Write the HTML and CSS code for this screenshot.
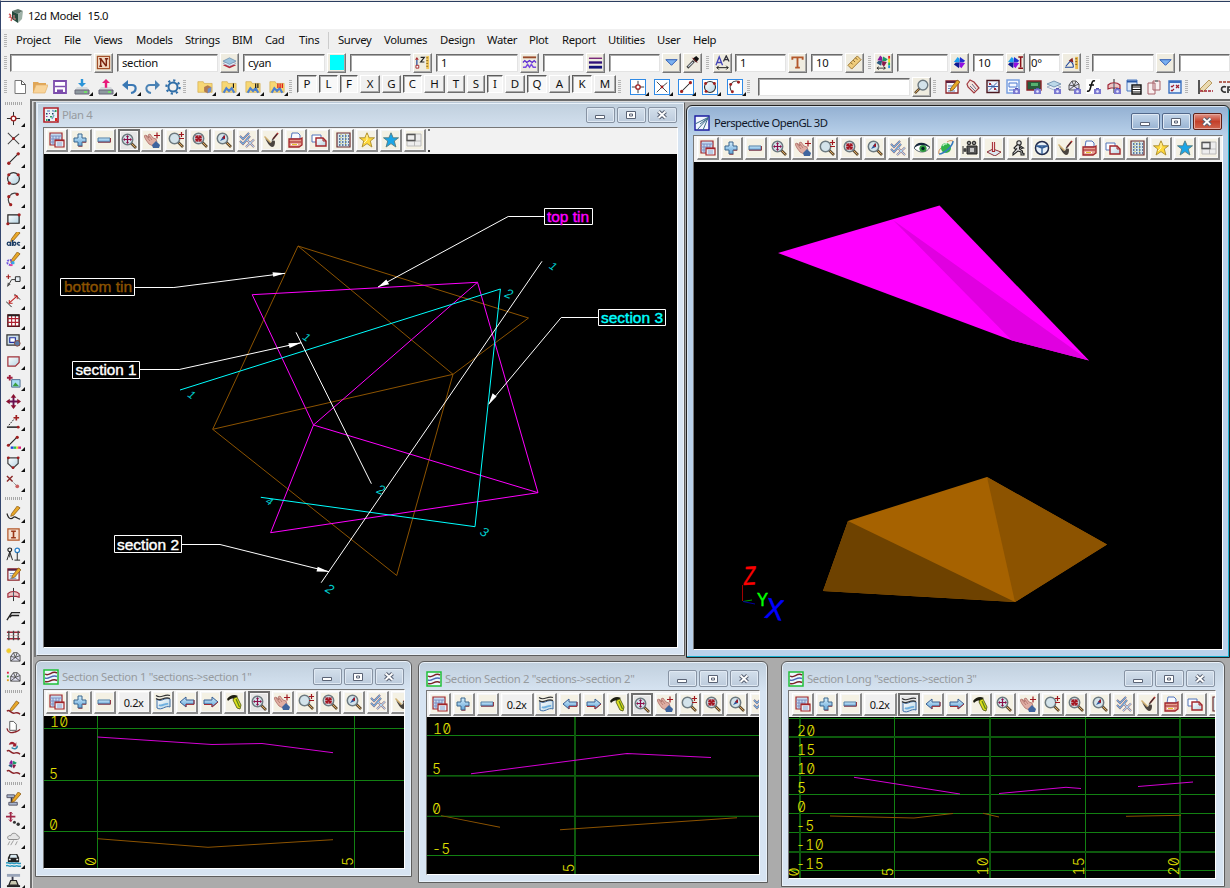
FILE: index.html
```html
<!DOCTYPE html>
<html lang="en">
<head>
<meta charset="utf-8">
<title>12d Model 15.0</title>
<link rel="stylesheet" href="styles.css">
</head>
<body>
<svg class="defs" width="0" height="0">
<defs>
<linearGradient id="blu" x2="0" y2="1"><stop offset="0" stop-color="#d5effc"/><stop offset="1" stop-color="#5fa3d8"/></linearGradient>
<linearGradient id="pal" x2="1" y2="1"><stop offset="0" stop-color="#fff"/><stop offset="1" stop-color="#b5d3e2"/></linearGradient>
</defs>
<symbol id="lens" viewBox="0 0 16 16"><path d="M10 10l5 5" stroke="#5d4a33" stroke-width="2.6"/><path d="M11 11l3.500 3.500" stroke="#e0a95b" stroke-width="1"/><circle cx="6.500" cy="6.500" r="5.200" fill="#d3e3ea" stroke="#6d7a80" stroke-width="1.500"/></symbol>
<symbol id="menu" viewBox="0 0 16 16"><path d="M1 1h12v12H1z" fill="#c3dcf0" stroke="#a3262b" stroke-width="1.200"/><path d="M1 4h12M4 4v9M7 4v4M10 4v4M1 7h9M1 10h4" stroke="#7e8fc4"/><path d="M6 8h9v7H6z" fill="#e6eef8" stroke="#a3262b" stroke-width="1.200"/><path d="M6 8.500h9" stroke="#a3262b" stroke-width="1.400"/><path d="M8 11h5M8 13h5" stroke="#8aa6d0"/></symbol>
<symbol id="plus" viewBox="0 0 16 16"><path d="M6 2h4v4h4v4h-4v4H6v-4H2V6h4z" fill="url(#blu)" stroke="#3b668e"/><path d="M6.500 14.300h4M10.300 10.300h4" stroke="#8f4a55"/></symbol>
<symbol id="minus" viewBox="0 0 16 16"><path d="M2 6h12v4H2z" fill="url(#blu)" stroke="#4f7fa8"/><path d="M2 10.200h12.500V6" fill="none" stroke="#8f3a48"/></symbol>
<symbol id="fit" viewBox="0 0 16 16"><use href="#lens"/><path d="M6.500 3v7M3 6.500h7" stroke="#8b0f4a" stroke-width="1.200"/><path d="M5 4l1.500-2L8 4M5 9l1.500 2L8 9M4 5L2 6.500 4 8M9 5l2 1.500L9 8" fill="#8b0f4a"/></symbol>
<symbol id="pan" viewBox="0 0 16 16"><path d="M0 4l2-1 3 3-1-3 2-1 3 4 3 1 1 3-4 4-4-2-3-4z" fill="#dfaea3" stroke="#a8645e" stroke-width=".7"/><path d="M2 4l4 5M5 4l3 4" stroke="#a86a62" stroke-width=".7"/><path d="M8 13l4-4 4 4-1 3H9z" fill="#3f659e"/><path d="M13 .5v6M10 3.500h6" stroke="#a01820" stroke-width="1.200"/></symbol>
<symbol id="zpm" viewBox="0 0 16 16"><use href="#lens"/><path d="M13.500 0v5M11 2.500h5M11 6.500h5" stroke="#a01820" stroke-width="1.200"/></symbol>
<symbol id="zin" viewBox="0 0 16 16"><use href="#lens"/><path d="M3.500 3.500l6 6M9.500 3.500l-6 6" stroke="#a31420" stroke-width="1.400"/><path d="M3.200 5.700h2.500V3.200M7.300 3.200v2.500h2.500M3.200 7.300h2.500v2.500M7.300 9.800V7.300h2.500" fill="none" stroke="#a31420" stroke-width="1.200"/></symbol>
<symbol id="zprev" viewBox="0 0 16 16"><use href="#lens"/><path d="M4 9l4-6 1 4z" fill="#2a5aa0"/><path d="M6 6l3-3v4z" fill="#a31420"/></symbol>
<symbol id="checks" viewBox="0 0 16 16"><g fill="none"><path d="M1 4l3 3 6-6M1 9l3 3 7-8M8 8l7 7M15 7.500L7 15" stroke="#96505e" stroke-width="2"/><path d="M1 4l3 3 6-6M1 9l3 3 7-8" stroke="#6fb0e0" stroke-width="1.300"/><path d="M8 8l7 7M15 7.500L7 15" stroke="#aed8f2" stroke-width="1.100"/></g></symbol>
<symbol id="brush" viewBox="0 0 16 16"><path d="M15 1l-5 6" stroke="#b03030" stroke-width="1.800"/><path d="M14 2L9 8.500" stroke="#333" stroke-width="1.200"/><path d="M2 6l6 5c1-3 4-3 4-1 0 3-1 5-3 5C6 14 4 10 2 6z" fill="#4a443e"/><path d="M1.500 4.500l6 6" stroke="#d0b070" stroke-width="1.500"/></symbol>
<symbol id="print" viewBox="0 0 16 16"><path d="M5 1h6l2 2v4H4z" fill="#f6f9ff" stroke="#5274bb"/><path d="M2 7h11l2-1v7l-3 2H2z" fill="#e6a091" stroke="#a3262b" stroke-width="1.300"/><path d="M2 10h12" stroke="#a3262b"/><path d="M4 12.500h7" stroke="#fff" stroke-width="1.500"/><path d="M5 12.500h5" stroke="#e3c52a" stroke-width="1"/></symbol>
<symbol id="copy" viewBox="0 0 16 16"><path d="M1 3h9v7H1z" fill="#fff" stroke="#5274bb"/><path d="M5 6h7l3 3v5H5z" fill="url(#pal)" stroke="#a3262b" stroke-width="1.400"/><path d="M12 6v3h3" fill="none" stroke="#a3262b"/></symbol>
<symbol id="grid" viewBox="0 0 16 16"><path d="M2 1h13v14H2z" fill="#d6e8ee" stroke="#6b2a2e" stroke-width="1.200"/><path d="M4 4h10M4 7h10M4 10h10M4 13h10" stroke="#3c5a86" stroke-width="1.400" stroke-dasharray="1.500 1.500"/><path d="M6 2v12M10.500 2v12" stroke="#c8b84a" stroke-width="1" stroke-dasharray="1 2"/></symbol>
<symbol id="star" viewBox="0 0 16 16"><path d="M8 .8l2.200 5H15.500L11.300 9l1.600 6L8 11.600 3.100 15l1.600-6L.5 5.800h5.300z" fill="#ffd93b" stroke="#a98a2c" stroke-width=".9"/><path d="M8 3v5l-3 3" stroke="#fff6c0" fill="none"/></symbol>
<symbol id="starb" viewBox="0 0 16 16"><path d="M8 .8l2.200 5H15.500L11.300 9l1.600 6L8 11.600 3.100 15l1.600-6L.5 5.800h5.300z" fill="#1ba6e8" stroke="#557c80" stroke-width=".9"/></symbol>
<symbol id="layout" viewBox="0 0 16 16"><path d="M1 2h14v12H1zM8.500 2v12M1 9h14" fill="#ededed" stroke="#bbb"/><path d="M1 2.500h8v6H1z" fill="#eee" stroke="#555" stroke-width="1.300"/></symbol>
<symbol id="eye" viewBox="0 0 16 16"><path d="M0 8c3-5 10-6 16-1-3 6-11 7-16 1z" fill="#fff" stroke="#234" stroke-width=".7"/><circle cx="9" cy="8.500" r="3.600" fill="#2f9a3d"/><circle cx="9" cy="8.500" r="1.700" fill="#022"/><path d="M0 8c2-7 12-7 16 0-5-4-11-4-16 0z" fill="#15273a"/></symbol>
<symbol id="planet" viewBox="0 0 16 16"><circle cx="8" cy="8" r="5" fill="#32b24a"/><path d="M5 6a3 3 0 014-2" stroke="#baf0c0" stroke-width="1.500" fill="none"/><path d="M1 14C6 14 15 6 15 1" stroke="#357ac0" stroke-width="1.600" fill="none"/><path d="M1 14c-1-3 1-5 2-6M15 1c-3-1-4 0-6 1" stroke="#c5783b" stroke-width=".8" fill="none"/></symbol>
<symbol id="camera" viewBox="0 0 16 16"><path d="M5 6h10v8H5z" fill="#555" stroke="#222"/><path d="M1 6v8M1 10h4M2 8l2 4M4 8l-2 4" stroke="#333"/><circle cx="7" cy="3" r="1.800" fill="#888" stroke="#222"/><circle cx="12" cy="3" r="1.800" fill="#888" stroke="#222"/><path d="M8 8h4v4H8z" fill="#c5c5c5"/></symbol>
<symbol id="joy" viewBox="0 0 16 16"><path d="M1 12l6-3 8 3-6 4z" fill="#dce8f0" stroke="#8b3038"/><path d="M7.500 12V2" stroke="#a3262b" stroke-width="3.200"/><path d="M7.500 11V2" stroke="#f4d9d9" stroke-width="1.200"/></symbol>
<symbol id="walk" viewBox="0 0 16 16"><g fill="#ddd" stroke="#222" stroke-width="1.100"><circle cx="9" cy="3" r="2.200"/><path d="M7 5L4 8l1.500 1.500L7 8.500 3 13v2l5-4 3 1v3h3v-1.500l-1.500-.5V11L9.500 9V7l2 1.500 2-.5L9 5z"/></g></symbol>
<symbol id="wheel" viewBox="0 0 16 16"><circle cx="8" cy="8" r="6.500" fill="#e8f1f8" stroke="#222b4a" stroke-width="1.500"/><path d="M2 6h12M8 7v7M8 8L3 6M8 8l5-2" stroke="#335e96" stroke-width="1.400"/></symbol>
<symbol id="sec" viewBox="0 0 16 16"><path d="M2 5c4 4 7-2 13 0v8c-5-2-8 4-13 1z" fill="url(#pal)" stroke="#3e6ea8"/><path d="M1 1.500c5 4 8-2 14 0M1 4.500c5 4 8-3 14 0" fill="none" stroke="#333" stroke-width="1.100"/><path d="M4 11c3 2 6-2 9-1" stroke="#6fb0e0" fill="none" stroke-width="2"/></symbol>
<symbol id="left" viewBox="0 0 16 16"><path d="M1 8l6-5v3h8v4H7v3z" fill="url(#blu)" stroke="#365e94"/><path d="M7 13v-2.600h8V6" fill="none" stroke="#a0303a"/></symbol>
<symbol id="right" viewBox="0 0 16 16"><path d="M15 8L9 3v3H1v4h8v3z" fill="url(#blu)" stroke="#365e94"/><path d="M1 10.500h8V13l6-5" fill="none" stroke="#a0303a"/></symbol>
<symbol id="torch" viewBox="0 0 16 16"><path d="M0 5c3-4 7-5 11-3l-4 3C5 4 3 5 1 7z" fill="#1c1c10"/><path d="M7 4l3-1 4 8-1 4-3-1-4-8z" fill="#dfe01e" stroke="#44500a" stroke-width=".8"/><path d="M9 5l3.500 8" stroke="#5c8416" stroke-width="1.200"/></symbol>
<!-- window captions -->
<symbol id="w-plan" viewBox="0 0 16 16"><path d="M1 1h14v14H1z" fill="#eaf3f4" stroke="#b2222a" stroke-width="1.600"/><path d="M4 4h3M9 3.500l3 1M11 8l-2 4" stroke="#7fa0c8" stroke-width="1.500"/><path d="M3 6h1.500v1.500H3zM9 6h1.500v1.500H9zM5 12h2v2H5z" fill="#16406a"/><path d="M3 12h1.500v2H3zM12 3h1.500v2H12zM7 9h2v1.500H7z" fill="#2ca05a"/><path d="M3 9h1.500v1H3zM6 6h1v1H6z" fill="#8a30a0"/><path d="M12 11h2v3h-2z" fill="#e02020"/></symbol>
<symbol id="w-persp" viewBox="0 0 16 16"><path d="M1 1h14v14H1z" fill="#f2f6ff" stroke="#1b1ba0" stroke-width="1.400"/><path d="M1 9L15 2 3 15M14 3L9 15M14 3L6 9" fill="none" stroke="#3a6a86"/></symbol>
<symbol id="w-sec" viewBox="0 0 16 16"><path d="M1 1h14v14H1z" fill="#eef8ff" stroke="#20c038" stroke-width="1.500"/><path d="M2 5c4 3 7-4 12-1M2 12.500c4 2 7-4 12-1" fill="none" stroke="#7a2226" stroke-width="1.500"/><path d="M2 9c4 2 7-4 12-1.500" fill="none" stroke="#4a68b4" stroke-width="1.400"/></symbol>
<symbol id="logo" viewBox="0 0 16 16"><path d="M4 3l6-2 5 2-5 3z" fill="#60776c"/><path d="M4 3l6 3v9l-6-4z" fill="#274b3e"/><path d="M10 6l5-3-1 8-4 4z" fill="#9db0a6"/><path d="M1 6c2 1 2 2 1 3 2 0 2 2 1 4" stroke="#d25a5a" fill="none" stroke-width="1.500"/><path d="M6 7v4h2" stroke="#d88" fill="none"/></symbol>
<!-- field buttons -->
<symbol id="b-n" viewBox="0 0 16 16"><path d="M1.500 1.500h13v13h-13z" fill="#f0d6c0" stroke="#a4512a" stroke-width="1.300"/><path d="M5 12V4M3.500 4H6M5 4l6 8M11 12V4M9.500 4H13M3.500 12h3" stroke="#7c2410" stroke-width="1.500"/></symbol>
<symbol id="layers" viewBox="0 0 16 16"><path d="M1 11l7-3 7 3-7 3z" fill="#b52a3a"/><path d="M1 9l7-3 7 3-7 3z" fill="#e8eef6" stroke="#8899b8" stroke-width=".6"/><path d="M1 6.500L8 3l7 3.500L8 10z" fill="#9cc3dd" stroke="#54789c" stroke-width=".6"/></symbol>
<symbol id="zrule" viewBox="0 0 16 16"><path d="M2 11V5" stroke="#22489a" stroke-width="1.300"/><path d="M0 5l2-3 2 3z" fill="#a3262b"/><path d="M1 11h3v3H1z" fill="#fff" stroke="#a3262b"/><path d="M6 2.500h4L6 7.500h4" stroke="#222" fill="none" stroke-width="1.200"/><path d="M12 1h3v14h-3z" fill="#f0c65a"/><path d="M12 3h2M12 6h2M12 9h2M12 12h2" stroke="#8a6518"/></symbol>
<symbol id="wave" viewBox="0 0 16 16"><path d="M1 2.500h14" stroke="#9a4b2a" stroke-width="2"/><path d="M1 8l2-2 2 2 3-2 3 2 2-2 2 2" fill="none" stroke="#5a2ad0" stroke-width="1.400"/><path d="M1 13h3l2-3 2 3 2-3 2 3h3" fill="none" stroke="#7a4ae0" stroke-width="1.600"/></symbol>
<symbol id="bars" viewBox="0 0 16 16"><path d="M1 3.500h14" stroke="#7a2a7a" stroke-width="1.500"/><path d="M1 8h14" stroke="#30107a" stroke-width="2.500"/><path d="M1 13h14" stroke="#12127a" stroke-width="3"/></symbol>
<symbol id="drop" viewBox="0 0 16 16"><path d="M2 5h12l-6 6z" fill="#7ab0f0" stroke="#2855b0"/></symbol>
<symbol id="dropper" viewBox="0 0 16 16"><path d="M2.500 13.500l7-7" stroke="#444" stroke-width="3"/><path d="M3.500 12.500l5-5" stroke="#d9e4ec" stroke-width="1.200"/><path d="M8 4l4 4 3-4-3-3z" fill="#111"/><path d="M8 3l5 5" stroke="#8b2020"/></symbol>
<symbol id="aa" viewBox="0 0 16 16"><path d="M1 11L4.500 2 8 11M2.500 8h4" fill="none" stroke="#4444b8" stroke-width="1.400"/><path d="M9 7l3-6 3 6M10 5h4" fill="none" stroke="#30303a" stroke-width="1.400"/><path d="M2 13.500h12M4 11.500l-2 2 2 2M12 11.500l2 2-2 2" fill="none" stroke="#111"/></symbol>
<symbol id="tee" viewBox="0 0 16 16"><path d="M2.500 5V2.500h11V5M8 2.500v11M5.500 13.500h5" fill="none" stroke="#b4582a" stroke-width="2"/></symbol>
<symbol id="rule" viewBox="0 0 16 16"><path d="M1 11L11 1l4 4L5 15z" fill="#f0cd7c" stroke="#9b7430"/><path d="M4 8l2 2M6.500 5.500l2 2M9 3l2 2" stroke="#7a5a20"/></symbol>
<symbol id="pin" viewBox="0 0 16 16"><path d="M8 8L3 7 6 2l2 2z" fill="#8a1a9a"/><path d="M8 8l1-5 5 3-2 2z" fill="#1a9a6a"/><path d="M8 8l5 1-3 5-2-2z" fill="#8a1a4a"/><path d="M8 8l-1 5-5-3 2-2z" fill="#2a5a80"/></symbol>
<symbol id="pinc" viewBox="0 0 16 16"><use href="#pin" x="-1.500" y="-1.500"/><path d="M1 14h9M3 12.500L1 14l2 1.500M8 12.500l2 1.500-2 1.500" fill="none" stroke="#222" stroke-width=".9"/><path d="M14 1v3" stroke="#e02020" stroke-width="2"/><path d="M14 4v4" stroke="#e8e020" stroke-width="2"/><path d="M14 8v3" stroke="#20c040" stroke-width="2"/><path d="M14 11v3" stroke="#2090e0" stroke-width="2"/></symbol>
<symbol id="pinb" viewBox="0 0 16 16"><path d="M8 8L2 7.500 6 2l2 2z" fill="#1aa0f0"/><path d="M8 8l.5-6L14 6l-2 2z" fill="#2030d0"/><path d="M8 8l6 .5L10 14l-2-2z" fill="#9010e0"/><path d="M8 8l-.5 6L2 10l2-2z" fill="#111a90"/></symbol>
<symbol id="pinh" viewBox="0 0 16 16"><use href="#pinb" x="-2"/><path d="M11 2h5M13.500 3v10M11 14h5" stroke="#8a1018" stroke-width="1.600"/></symbol>
<symbol id="angle" viewBox="0 0 16 16"><path d="M1 13h9M2 12l6-7M7 7c2 1 3 3 3 6" fill="none" stroke="#22489a" stroke-width="1.200"/><path d="M5 6l4-3 1 5z" fill="#8a2020"/><path d="M12 2h3v13h-3z" fill="#e8b848"/><path d="M12 4h2M12 7h2M12 10h2" stroke="#7a5a20"/></symbol>
<!-- standard toolbar -->
<symbol id="new" viewBox="0 0 16 16"><path d="M3 1.500h6.500l4 4v9H3z" fill="#fff" stroke="#777"/><path d="M9.500 1.500v4h4" fill="none" stroke="#555"/></symbol>
<symbol id="open" viewBox="0 0 16 16"><path d="M1 14V3h5l1 1h7v3" fill="#e0a656"/><path d="M1 14L4 6h12l-3 8z" fill="#f8d49a" stroke="#e3b06a" stroke-width=".7"/></symbol>
<symbol id="save" viewBox="0 0 16 16"><path d="M2 2h12v12H2z" fill="#fff" stroke="#7c4dac" stroke-width="1.800"/><path d="M3 7.500h10" stroke="#7c4dac" stroke-width="1.500"/><path d="M5 10.500h6V14H5z" fill="#7c4dac"/></symbol>
<symbol id="disk" viewBox="0 0 16 16"><path d="M1 11l2-3h10l2 3z" fill="#d5dadd"/><path d="M1 11h14v4H1z" fill="#8d999f" stroke="#667"/><path d="M10 13h3" stroke="#6bf05a" stroke-width="1.600"/></symbol>
<symbol id="imp" viewBox="0 0 16 16"><use href="#disk"/><path d="M6.500 0h3v5H13l-5 5-5-5h3.500z" fill="#2a94d8" transform="translate(1.600 0) scale(.8)"/></symbol>
<symbol id="exp" viewBox="0 0 16 16"><use href="#disk"/><path d="M6.500 11h3V5H13L8 0 3 5h3.500z" fill="#e8187a" transform="translate(1.600 0) scale(.8)"/></symbol>
<symbol id="undo" viewBox="0 0 16 16"><path d="M3 6h7c5 0 5 7-1 8" fill="none" stroke="#3a78b4" stroke-width="2.200"/><path d="M0 6l6-5v10z" fill="#3a78b4"/></symbol>
<symbol id="redo" viewBox="0 0 16 16"><path d="M13 6H6c-5 0-5 7 1 8" fill="none" stroke="#4a82b4" stroke-width="2"/><path d="M16 6l-5-5v10z" fill="#4a82b4"/></symbol>
<symbol id="gear" viewBox="0 0 16 16"><circle cx="8" cy="8" r="4.500" fill="none" stroke="#2f6ea8" stroke-width="2"/><circle cx="8" cy="8" r="6.600" fill="none" stroke="#2f6ea8" stroke-width="2.200" stroke-dasharray="2.200 2.980"/></symbol>
<symbol id="fold" viewBox="0 0 18 16"><path d="M1 14V2h6l1 2h9v10z" fill="#f7d774" stroke="#cfa743" stroke-width=".7"/></symbol>
<symbol id="f0" viewBox="0 0 18 16"><use href="#fold"/><path d="M8 8l4-2 4 2v5l-4 2-4-2z" fill="#b07a50"/><path d="M12 10l4-2v5l-4 2z" fill="#6a8fd0"/></symbol>
<symbol id="fg" viewBox="0 0 18 16"><use href="#fold"/><path d="M3 14.500l3-5 3 3 3-3 3 5" fill="none" stroke="#4c80d0" stroke-width="2.400"/></symbol>
<symbol id="f1" viewBox="0 0 18 16"><use href="#fg"/><path d="M14 4v5" stroke="#111" stroke-width="1.300"/></symbol>
<symbol id="f2" viewBox="0 0 18 16"><use href="#fg"/><path d="M12 4v5M14.500 4v5" stroke="#111" stroke-width="1.300"/></symbol>
<symbol id="f3" viewBox="0 0 18 16"><use href="#fg"/><path d="M10 4v5M12.500 4v5M15 4v5" stroke="#e02020" stroke-width="1.500"/></symbol>
<!-- drawing tools -->
<symbol id="pt" viewBox="0 0 16 16"><path d="M8 1v14M1 8h14" stroke="#222"/><circle cx="8" cy="8" r="2.500" fill="#fff" stroke="#a02020" stroke-width="1.500"/></symbol>
<symbol id="cross" viewBox="0 0 16 16"><path d="M2 2l6 6 6-5M2 14l6-6 6 6" fill="none" stroke="#444" stroke-width="1.100"/><circle cx="8" cy="8" r="1.600" fill="#a02020"/></symbol>
<symbol id="line" viewBox="0 0 16 16"><path d="M2 14L14 2" stroke="#222" stroke-width="1.200"/><circle cx="3" cy="13" r="1.800" fill="#a02020"/><circle cx="13" cy="3" r="1.800" fill="#a02020"/></symbol>
<symbol id="circ" viewBox="0 0 16 16"><circle cx="8" cy="8" r="6.300" fill="url(#pal)" stroke="#333" stroke-width="1.300"/><g fill="#a02020"><circle cx="3" cy="4" r="1.700"/><circle cx="13" cy="4" r="1.700"/><circle cx="3.500" cy="13" r="1.700"/></g></symbol>
<symbol id="arc" viewBox="0 0 16 16"><path d="M13 2C5-1-1 7 5 14" fill="none" stroke="#444" stroke-width="1.200"/><g fill="#a02020"><circle cx="12" cy="2.500" r="1.700"/><circle cx="3" cy="5" r="1.700"/><circle cx="5" cy="13.500" r="1.700"/></g></symbol>
<symbol id="rect" viewBox="0 0 16 16"><path d="M2 3h12v9H2z" fill="url(#pal)" stroke="#222" stroke-width="1.300"/><circle cx="14" cy="3" r="1.700" fill="#a02020"/><circle cx="2" cy="12.500" r="1.700" fill="#a02020"/></symbol>
<symbol id="pen" viewBox="0 0 16 16"><path d="M5 9L11 1l3 2-7 8-3 1z" fill="#e8a828" stroke="#8a5a18" stroke-width=".8"/></symbol>
<symbol id="abc" viewBox="0 0 16 16"><use href="#pen" x="1" y="-2"/><g fill="none" stroke="#1c3c64" stroke-width="1.400"><circle cx="3" cy="12.500" r="1.700"/><path d="M5 10.500V15M7 8.500V15"/><circle cx="9" cy="12.500" r="1.600"/><path d="M15 11.500c-3-2-4 3 0 2.500"/></g></symbol>
<symbol id="penc" viewBox="0 0 16 16"><use href="#pen" x="1" y="-1"/><circle cx="4" cy="11" r="2.600" fill="none" stroke="#6a50e0" stroke-width="2" stroke-dasharray="2 1"/><path d="M6 10h3v3H6z" fill="#30b0e8"/><path d="M4 13h3v2H4z" fill="#e040a0"/></symbol>
<symbol id="leader" viewBox="0 0 16 16"><path d="M0 4h5M2.500 1.500v5" stroke="#a02020" stroke-width="1.200"/><path d="M2 14l4-7h4" fill="none" stroke="#333"/><path d="M1 15l1-5 3 2z" fill="#555"/><path d="M10 4h5v5h-5z" fill="#e8f0f8" stroke="#222"/></symbol>
<symbol id="dim" viewBox="0 0 16 16"><path d="M0 9l6 6M9 1l6 6" stroke="#222"/><path d="M3 11l9-8" stroke="#c02020" stroke-width="1.200"/><path d="M3.500 7.500v3.500H7M8.500 3H12v3.500" fill="none" stroke="#c02020"/></symbol>
<symbol id="table" viewBox="0 0 16 16"><path d="M2 2h12v12H2z" fill="#fff" stroke="#5a1018" stroke-width="1.600"/><path d="M2 6h12M2 10h12M6 2v12M10 2v12" stroke="#b02030" stroke-width="1.200"/><path d="M2 2.500h12" stroke="#222" stroke-width="2"/></symbol>
<symbol id="win" viewBox="0 0 16 16"><path d="M1 2h13v11H1z" fill="#c8dbe8" stroke="#333" stroke-width="1.300"/><path d="M4 5h6v5H4z" fill="#fff" stroke="#2030a0" stroke-width="1.200"/><circle cx="12" cy="11" r="3" fill="#5a7aa8" stroke="#843"/></symbol>
<symbol id="poly" viewBox="0 0 16 16"><path d="M2 3h12v6l-4 4H2z" fill="url(#pal)" stroke="#a03038" stroke-width="1.300"/></symbol>
<symbol id="img" viewBox="0 0 16 16"><path d="M4 1v6M1 4h6" stroke="#a02040" stroke-width="2"/><path d="M6 6h9v8H6z" fill="#a8dcf4" stroke="#4a6a90"/><path d="M7 13l3-4 4 4z" fill="#3aa040"/></symbol>
<symbol id="move" viewBox="0 0 16 16"><path d="M8 2v12M2 8h12" stroke="#6a1050" stroke-width="2"/><path d="M5 4l3-4 3 4zM5 12l3 4 3-4zM4 5L0 8l4 3zM12 5l4 3-4 3z" fill="#8a1030"/></symbol>
<symbol id="rot" viewBox="0 0 16 16"><path d="M1 14h13" stroke="#222" stroke-width="1.600"/><path d="M3 12l6-7" stroke="#222" stroke-dasharray="2 1"/><path d="M11 1v6M8 4h6" stroke="#a02020" stroke-width="1.800"/><circle cx="13" cy="14" r="1.500" fill="#a02020"/></symbol>
<symbol id="colr" viewBox="0 0 16 16"><path d="M3 11L12 2" stroke="#222" stroke-width="1.200"/><circle cx="12" cy="2.500" r="1.700" fill="#a02020"/><circle cx="2.500" cy="11" r="1.600" fill="#a02020"/><path d="M5 13.500h3" stroke="#2040e0" stroke-width="2.500"/><path d="M8 13.500h3" stroke="#20c060" stroke-width="2.500"/><path d="M11 13.500h2" stroke="#e8d020" stroke-width="2.500"/><path d="M13 13.500h3" stroke="#e02080" stroke-width="2.500"/></symbol>
<symbol id="shield" viewBox="0 0 16 16"><path d="M2 3h11v6l-5.500 5L2 9z" fill="url(#pal)" stroke="#444" stroke-width="1.300"/><g fill="#a02020"><circle cx="2.500" cy="3" r="1.500"/><circle cx="13" cy="3" r="1.500"/><circle cx="7.500" cy="13.500" r="1.500"/></g></symbol>
<symbol id="xpt" viewBox="0 0 16 16"><path d="M1 1l6 6M7 1L1 7" stroke="#8a2828" stroke-width="1.500"/><path d="M7 7l4 4" stroke="#555" stroke-dasharray="1 1"/><circle cx="12" cy="12" r="2" fill="#c86060"/></symbol>
<symbol id="penl" viewBox="0 0 16 16"><use href="#pen" x="1" y="-1"/><path d="M1 8c2 7 5 6 7 4s4 2 7 2" fill="none" stroke="#222" stroke-width="1.200"/></symbol>
<symbol id="ibox" viewBox="0 0 16 16"><path d="M2 2h12v12H2z" fill="#f4e0d0" stroke="#b4582a" stroke-width="1.300"/><path d="M5.500 4.500h5M8 4.500v7M5.500 11.500h5" stroke="#9a3818" stroke-width="1.700"/></symbol>
<symbol id="surv" viewBox="0 0 16 16"><circle cx="4" cy="3" r="2" fill="none" stroke="#222" stroke-width="1.200"/><path d="M4 5l-3 9M4 5l3 9M4 5v6" stroke="#222"/><circle cx="12" cy="3.500" r="2.400" fill="#fff" stroke="#2a80c8" stroke-width="1.300"/><path d="M12 6v8M9 14h6" stroke="#222"/></symbol>
<symbol id="note" viewBox="0 0 16 16"><path d="M2 2h12v12H2z" fill="#f4f8ff" stroke="#8a2228" stroke-width="1.300"/><path d="M2 3h12" stroke="#5a2040" stroke-width="2"/><path d="M4 7h7M4 9.500h7M4 12h7" stroke="#6888b8"/><use href="#pen" x="2"/></symbol>
<symbol id="plumb" viewBox="0 0 16 16"><path d="M8 1v14" stroke="#222"/><path d="M2 11V7c3-3 9-3 12 0v4l-3-1H5z" fill="#ecc4c4" stroke="#a02838" stroke-width="1.200"/><path d="M8 5v6" stroke="#456"/></symbol>
<symbol id="road" viewBox="0 0 16 16"><path d="M1 13l5-8h9M4 10l2-2h8" fill="none" stroke="#222" stroke-width="1.400"/></symbol>
<symbol id="rail" viewBox="0 0 16 16"><path d="M1 4.500h14M1 11.500h14" stroke="#a02838" stroke-width="1.600"/><path d="M3 3v10M8 3v10M13 3v10" stroke="#444" stroke-width="1.400"/><path d="M1 8h14" stroke="#c88" stroke-dasharray="1 1"/></symbol>
<symbol id="tin" viewBox="0 0 16 16"><path d="M5 14V9l3-4h4l3 3v6zM5 14l5-4 5 4M8 5l2 5 2-5M5 9l5 1 5-2" fill="#dde" stroke="#444" stroke-width=".9"/></symbol>
<symbol id="tin1" viewBox="0 0 16 16"><use href="#tin"/><circle cx="3" cy="3" r="2.300" fill="#f0d020" stroke="#f0c860"/></symbol>
<symbol id="tin2" viewBox="0 0 16 16"><use href="#tin"/><path d="M1 4h2v2H1z" fill="#e02040"/><path d="M1 8h2v2H1z" fill="#30b040"/><path d="M1 12h2v2H1z" fill="#e0a020"/></symbol>
<symbol id="wavep" viewBox="0 0 16 16"><path d="M1 11c3-3 4 3 8 2s3-1 6 1" fill="none" stroke="#8a2228" stroke-width="1.500"/></symbol>
<symbol id="s1" viewBox="0 0 16 16"><use href="#pen"/><use href="#wavep" y="1"/></symbol>
<symbol id="s2" viewBox="0 0 16 16"><path d="M4 1.500h4l3 3V11H4z" fill="#fff" stroke="#555"/><path d="M1 9c1 5 5 5 8 4s4-1 6-3" fill="none" stroke="#8a2228" stroke-width="1.400"/></symbol>
<symbol id="s3" viewBox="0 0 16 16"><path d="M3 5c1-4 5-4 7-1l1-2v5H7l1-2C6 4 5 5 3 5z" fill="#a02030"/><path d="M12 6c0 4-4 4-6 2" stroke="#38a" fill="none" stroke-width="1.600"/><use href="#wavep" y="1"/></symbol>
<symbol id="s4" viewBox="0 0 16 16"><use href="#pin" x="1" y="-1.500" width="12" height="12"/><use href="#wavep" y="1"/></symbol>
<symbol id="pipe" viewBox="0 0 16 16"><path d="M1 3h8v3H1zM3 11h9v3H3z" fill="#a8b4cc" stroke="#556"/><path d="M6 6v5" stroke="#334" stroke-width="2"/><use href="#pen" x="2" y="-1"/></symbol>
<symbol id="mvp" viewBox="0 0 16 16"><path d="M5 0v10M0 5h10" stroke="#a02848" stroke-width="1.800"/><path d="M3 2l2-2 2 2M3 8l2 2 2-2" stroke="#a02848" fill="none"/><circle cx="9" cy="11" r="1.600" fill="#333"/><circle cx="13" cy="13" r="1.800" fill="#333"/></symbol>
<symbol id="rain" viewBox="0 0 16 16"><path d="M3 8c-3-2 0-5 2-4 1-4 7-3 7 0 3 0 3 4 0 4z" fill="#e5e5e5" stroke="#888"/><path d="M4 10l-2 4M8 9l-3 5M12 10l-2 4" stroke="#999"/></symbol>
<symbol id="car" viewBox="0 0 16 16"><path d="M2 6l2-4h8l2 4v5H2z" fill="#222"/><path d="M4 6l1-3h6l1 3z" fill="#d8e8f0"/><path d="M3 8h2M11 8h2" stroke="#fff" stroke-width="1.500"/><path d="M0 12c2-2 3 1 5 0s3 1 5 0 3 1 6 0M0 15c2-2 3 1 5 0s3 1 5 0 3 1 6 0" fill="none" stroke="#2a9ac0" stroke-width="1.600"/></symbol>
<symbol id="pit" viewBox="0 0 16 16"><path d="M1 1h14v3H1z" fill="#99a4b8"/><path d="M7 4v4" stroke="#334" stroke-width="2"/><path d="M3 13l2-5h6l2 5z" fill="#c8c8b0" stroke="#222" stroke-width="1.300"/><path d="M1 14h14" stroke="#222" stroke-width="2"/></symbol>
<!-- report / camera tools -->
<symbol id="tag" viewBox="0 0 16 16"><path d="M2 5l3-4 4 2 5 6-5 5-6-6z" fill="#f3e4de" stroke="#a03a40" stroke-width="1.200"/><path d="M5 7l5 5M7 5l4 5" stroke="#70708a"/></symbol>
<symbol id="mini" viewBox="0 0 16 16"><path d="M8 10h7v5H8z" fill="#7a78d0"/><path d="M10 9h3v1h-3z" fill="#5654b0"/><circle cx="11.500" cy="12.500" r="1.300" fill="#e8e8ff"/></symbol>
<symbol id="r3" viewBox="0 0 16 16"><path d="M2 1.500h12v12H2z" fill="#eef4fc" stroke="#4a1820" stroke-width="1.400"/><path d="M4 3.500l4 4-4 4M12 3.500l-4 4 4 4M3 7.500h10" fill="none" stroke="#3a60a8"/><path d="M4 4h2v2H4zM9 9h2v2H9z" fill="#a03040"/></symbol>
<symbol id="r4" viewBox="0 0 16 16"><path d="M2 1h12v13H2z" fill="#f4f8ff" stroke="#7aa0e0" stroke-width="1.500"/><path d="M4 4h8v4H4zM4 11h4" fill="none" stroke="#4a78d0"/><use href="#mini"/></symbol>
<symbol id="r5" viewBox="0 0 16 16"><path d="M1 2h14v9H1z" fill="#285c3c" stroke="#8a2228" stroke-width="1.400"/><path d="M5 4h7v3H5z" fill="#56b070"/><use href="#mini"/></symbol>
<symbol id="r6" viewBox="0 0 16 16"><path d="M1 8l7-3 7 3-7 3z" fill="#e8eef6" stroke="#8899b8" stroke-width=".7"/><path d="M1 5l7-3 7 3-7 3z" fill="#bcd8e8" stroke="#54789c" stroke-width=".7"/><use href="#mini"/></symbol>
<symbol id="r7" viewBox="0 0 16 16"><use href="#tin" x="-2" y="-3"/><use href="#mini"/></symbol>
<symbol id="r8" viewBox="0 0 16 16"><path d="M0 0h14v15H0z" fill="#fff"/><path d="M9 2c-3-1-3 2-4 5s-1 6-4 5M3 6h5" fill="none" stroke="#111" stroke-width="1.500"/><use href="#mini"/></symbol>
<symbol id="r9" viewBox="0 0 16 16"><use href="#plumb" y="-1"/><use href="#mini"/></symbol>
<symbol id="r10" viewBox="0 0 16 16"><path d="M1 1h10v11H1z" fill="#dce9f8" stroke="#4a78c0"/><path d="M1 2.500h10" stroke="#2858a8" stroke-width="2"/><path d="M6 6h9v9H6z" fill="#fff" stroke="#111" stroke-width="1.400"/><path d="M6 8h9M6 10.500h9M6 13h9" stroke="#111"/></symbol>
<symbol id="r11" viewBox="0 0 16 16"><path d="M2 4h7v11H2zM7 2h7v9H7z" fill="#f8efef" stroke="#a86068"/><path d="M9 1h3v2H9z" fill="#888"/></symbol>
<symbol id="r12" viewBox="0 0 16 16"><path d="M2 2h12v12H2z" fill="#e6f0fc" stroke="#3a70c0" stroke-width="1.400"/><path d="M2 3h12" stroke="#3a70c0" stroke-width="2"/><path d="M4 7l1 1 2-2M4 11l1 1 2-2M9 6l3 3M12 6L9 9" fill="none" stroke="#a02030" stroke-width="1.200"/></symbol>
<symbol id="r13" viewBox="0 0 16 16"><path d="M1 1v14" stroke="#222" stroke-width="1.500"/><path d="M2 10l9-9 3 3-9 9z" fill="#eadab0" stroke="#b89a60"/><path d="M2 12h13" stroke="#a02030" stroke-width="1.400" stroke-dasharray="3 1"/></symbol>
<symbol id="r14" viewBox="0 0 16 16"><path d="M1 3h14" stroke="#a03a2a" stroke-width="1.600" stroke-dasharray="3 1"/><path d="M8 8c-6-2-6 6 0 5M10 14V8h6M11 11h3" fill="none" stroke="#333" stroke-width="1.700"/></symbol>
<symbol id="c-min" viewBox="0 0 28 16"><path d="M9.500 8.500h9v3h-9z" fill="#fff" stroke="#5a6375"/></symbol>
<symbol id="c-max" viewBox="0 0 28 16"><path d="M9.500 4.500h9v7h-9z" fill="#fff" stroke="#5a6375"/><path d="M12.500 7h3v2h-3z" fill="#fff" stroke="#5a6375"/></symbol>
<symbol id="c-x" viewBox="0 0 28 16"><path d="M10.500 4.500l7 6.500M17.500 4.500l-7 6.500" stroke="#5a6375" stroke-width="4"/><path d="M10.500 4.500l7 6.500M17.500 4.500l-7 6.500" stroke="#fff" stroke-width="1.800"/></symbol>
</svg>

<div class="app">
<header class="title"><svg><use href="#logo"/></svg><span>12d Model&nbsp; 15.0</span></header>
<nav class="menubar"><i class="grip"></i><span>Project</span><span>File</span><span>Views</span><span>Models</span><span>Strings</span><span>BIM</span><span>Cad</span><span>Tins</span><i class="rule"></i><span>Survey</span><span>Volumes</span><span>Design</span><span>Water</span><span>Plot</span><span>Report</span><span>Utilities</span><span>User</span><span>Help</span></nav>

<div class="fields"><i class="grip"></i><div class="in"></div><b class="fb"><svg><use href="#b-n"/></svg></b><div class="in">section</div><b class="fb"><svg><use href="#layers"/></svg></b><div class="in">cyan</div><b class="fb"><i class="swatch"></i></b><div class="in"></div><b class="fb"><svg><use href="#zrule"/></svg></b><div class="in">1</div><b class="fb"><svg><use href="#wave"/></svg></b><div class="in"></div><b class="fb"><svg><use href="#bars"/></svg></b><div class="in"></div><b class="fb"><svg><use href="#drop"/></svg></b><b class="fb"><svg><use href="#dropper"/></svg></b><i class="grip"></i><b class="fb"><svg><use href="#aa"/></svg></b><div class="in">1</div><b class="fb"><svg><use href="#tee"/></svg></b><div class="in">10</div><b class="fb"><svg><use href="#rule"/></svg></b><i class="grip"></i><b class="fb"><svg><use href="#pinc"/></svg></b><div class="in"></div><b class="fb"><svg><use href="#pinb"/></svg></b><div class="in">10</div><b class="fb"><svg><use href="#pinh"/></svg></b><div class="in tight">0°</div><b class="fb"><svg><use href="#angle"/></svg></b><i class="grip"></i><div class="in"></div><b class="fb"><svg><use href="#drop"/></svg></b><div class="in"></div></div>

<div class="bar"><i class="grip"></i><b class="ic"><svg><use href="#new"/></svg></b><b class="ic"><svg><use href="#open"/></svg></b><b class="ic"><svg><use href="#save"/></svg></b><b class="ic c"><svg><use href="#imp"/></svg></b><b class="ic c"><svg><use href="#exp"/></svg></b><b class="ic c"><svg><use href="#undo"/></svg></b><b class="ic"><svg><use href="#redo"/></svg></b><b class="ic"><svg><use href="#gear"/></svg></b><i class="grip"></i><b class="ic c"><svg><use href="#f0"/></svg></b><b class="ic c"><svg><use href="#f1"/></svg></b><b class="ic c"><svg><use href="#f2"/></svg></b><b class="ic c"><svg><use href="#f3"/></svg></b><i class="grip"></i><span class="key on">P</span><span class="key on">L</span><span class="key on">F</span><span class="key">X</span><span class="key">G</span><span class="key on">C</span><span class="key">H</span><span class="key">T</span><span class="key">S</span><span class="key on">I</span><span class="key">D</span><span class="key on">Q</span><span class="key">A</span><span class="key on">K</span><span class="key">M</span><i class="grip"></i><b class="ic c box"><svg><use href="#pt"/></svg></b><b class="ic c box"><svg><use href="#cross"/></svg></b><b class="ic c box"><svg><use href="#line"/></svg></b><b class="ic c box"><svg><use href="#circ"/></svg></b><b class="ic c box"><svg><use href="#arc"/></svg></b><i class="grip"></i><div class="in"></div><b class="fb find"><svg class="flip"><use href="#lens"/></svg></b><i class="grip"></i><b class="ic"><svg><use href="#note"/></svg></b><b class="ic"><svg><use href="#tag"/></svg></b><b class="ic"><svg><use href="#r3"/></svg></b><b class="ic"><svg><use href="#r4"/></svg></b><b class="ic"><svg><use href="#r5"/></svg></b><b class="ic"><svg><use href="#r6"/></svg></b><b class="ic"><svg><use href="#r7"/></svg></b><b class="ic"><svg><use href="#r8"/></svg></b><b class="ic"><svg><use href="#r9"/></svg></b><b class="ic"><svg><use href="#r10"/></svg></b><b class="ic"><svg><use href="#r11"/></svg></b><b class="ic"><svg><use href="#r12"/></svg></b><i class="grip"></i><b class="ic"><svg><use href="#r13"/></svg></b><b class="ic"><svg><use href="#r14"/></svg></b></div>

<div class="work">
<aside class="side"><i class="hgrip first"></i>
<b class="ic c"><svg><use href="#pt"/></svg></b><b class="ic c"><svg><use href="#cross"/></svg></b><b class="ic c"><svg><use href="#line"/></svg></b><b class="ic c"><svg><use href="#circ"/></svg></b><b class="ic c"><svg><use href="#arc"/></svg></b><b class="ic c"><svg><use href="#rect"/></svg></b><b class="ic c"><svg><use href="#abc"/></svg></b><b class="ic c"><svg><use href="#penc"/></svg></b><b class="ic c"><svg><use href="#leader"/></svg></b><b class="ic c"><svg><use href="#dim"/></svg></b><b class="ic c"><svg><use href="#table"/></svg></b><b class="ic c"><svg><use href="#win"/></svg></b><b class="ic c"><svg><use href="#poly"/></svg></b><b class="ic c"><svg><use href="#img"/></svg></b><b class="ic c"><svg><use href="#move"/></svg></b><b class="ic c"><svg><use href="#rot"/></svg></b><b class="ic c"><svg><use href="#colr"/></svg></b><b class="ic c"><svg><use href="#shield"/></svg></b><b class="ic c"><svg><use href="#xpt"/></svg></b>
<i class="hgrip"></i>
<b class="ic c"><svg><use href="#penl"/></svg></b><b class="ic c"><svg><use href="#ibox"/></svg></b><b class="ic c"><svg><use href="#surv"/></svg></b><b class="ic c"><svg><use href="#note"/></svg></b><b class="ic c"><svg><use href="#plumb"/></svg></b><b class="ic c"><svg><use href="#road"/></svg></b><b class="ic c"><svg><use href="#rail"/></svg></b><b class="ic c"><svg><use href="#tin1"/></svg></b><b class="ic c"><svg><use href="#tin2"/></svg></b>
<i class="hgrip"></i>
<b class="ic c"><svg><use href="#s1"/></svg></b><b class="ic"><svg><use href="#s2"/></svg></b><b class="ic c"><svg><use href="#s3"/></svg></b><b class="ic c"><svg><use href="#s4"/></svg></b>
<i class="hgrip"></i>
<b class="ic c"><svg><use href="#pipe"/></svg></b><b class="ic c"><svg><use href="#mvp"/></svg></b><b class="ic c"><svg><use href="#rain"/></svg></b><b class="ic c"><svg><use href="#car"/></svg></b><b class="ic c"><svg><use href="#pit"/></svg></b>
</aside>

<main class="mdi">
<section class="win plan">
<div class="cap"><svg class="wi"><use href="#w-plan"/></svg><span>Plan 4</span><b class="cb"><svg><use href="#c-min"/></svg></b><b class="cb"><svg><use href="#c-max"/></svg></b><b class="cb"><svg><use href="#c-x"/></svg></b></div>
<div class="client"><div class="tools"><b><svg><use href="#menu"/></svg></b><b><svg><use href="#plus"/></svg></b><b><svg><use href="#minus"/></svg></b><b class="act"><svg><use href="#fit"/></svg></b><b><svg><use href="#pan"/></svg></b><b><svg><use href="#zpm"/></svg></b><b><svg><use href="#zin"/></svg></b><b><svg><use href="#zprev"/></svg></b><b><svg><use href="#checks"/></svg></b><b><svg><use href="#brush"/></svg></b><b><svg><use href="#print"/></svg></b><b><svg><use href="#copy"/></svg></b><b><svg><use href="#grid"/></svg></b><b><svg><use href="#star"/></svg></b><b><svg><use href="#starb"/></svg></b><b><svg><use href="#layout"/></svg></b><i class="dots"></i></div>
<svg class="cv" viewBox="44 154 633 493" preserveAspectRatio="none">
<g fill="none" stroke="#8c5300"><path d="M298 246L528.500 318 453 374.300 396.700 575.500 212.700 429.300zM298 246L453 374.300 212.700 429.300"/></g>
<g fill="none" stroke="#f0f"><path d="M313.500 425L252.200 294.700 477.500 282.300 538 492.700 270.600 532.700 313.500 425 477.500 282.300M313.500 425L538 492.700"/></g>
<path d="M180 390L500.400 289 475 526.700 260.800 497.300" fill="none" stroke="#0ff"/>
<g fill="none" stroke="#fff"><path d="M296 332.300L371.400 483.700M542 261.300L321.200 582.700"/><path d="M544.500 216.500H508.200L378 287M134.300 287.500H173.900L285 273.300M598.800 317.500H561.200L488.600 404.300M139.600 369.500H179.200L301.200 342.700M181.200 544.500H220L329 571.700"/><path d="M544.500 208.500h48v16h-48zM60.500 278.500h74v17h-74zM598.500 309.500h67v16h-67zM72.500 361.500h67v17h-67zM114.500 535.500h67v17h-67z"/></g>
<path d="M378 287l8.300-7.500 2.800 4.700zM285 273.300l-12.500-1 .8 4.500zM488.600 404.300l4-11 4 3.300zM301.200 342.700l-12.800.5 1.200 4.700zM329 571.700l-11.300-5-1.200 4.700z" fill="#fff"/>
<g class="lbl"><text x="547" y="221.500" textLength="42" lengthAdjust="spacingAndGlyphs" fill="#f0f" stroke="#f0f">top tin</text><text x="64" y="292" textLength="68" lengthAdjust="spacingAndGlyphs" fill="#8c5300" stroke="#8c5300">bottom tin</text><text x="601" y="322.500" textLength="62" lengthAdjust="spacingAndGlyphs" fill="#0ff" stroke="#0ff">section 3</text><text x="75.500" y="374.700" textLength="61" lengthAdjust="spacingAndGlyphs" fill="#fff" stroke="#fff">section 1</text><text x="117" y="549.500" textLength="62" lengthAdjust="spacingAndGlyphs" fill="#fff" stroke="#fff">section 2</text></g>
<g class="num"><text transform="translate(548.500 267.500) rotate(35)">1</text><text transform="translate(504 296.500) rotate(22)" class="big">2</text><text transform="translate(302 338.500) rotate(35)">1</text><text transform="translate(187 396) rotate(35)">1</text><text transform="translate(376 492.500) rotate(22)" class="big">2</text><text transform="translate(265 503) rotate(30)">4</text><text transform="translate(479 534) rotate(30)" class="big">3</text><text transform="translate(324.500 591) rotate(30)" class="big">2</text></g>
</svg></div>
</section>

<section class="win s1">
<div class="cap"><svg class="wi"><use href="#w-sec"/></svg><span>Section Section 1 "sections-&gt;section 1"</span><b class="cb"><svg><use href="#c-min"/></svg></b><b class="cb"><svg><use href="#c-max"/></svg></b><b class="cb"><svg><use href="#c-x"/></svg></b></div>
<div class="client"><div class="tools"><b><svg><use href="#menu"/></svg></b><b><svg><use href="#plus"/></svg></b><b><svg><use href="#minus"/></svg></b><b class="wide">0.2x</b><b><svg><use href="#sec"/></svg></b><b><svg><use href="#left"/></svg></b><b><svg><use href="#right"/></svg></b><b><svg><use href="#torch"/></svg></b><b class="act"><svg><use href="#fit"/></svg></b><b><svg><use href="#pan"/></svg></b><b><svg><use href="#zpm"/></svg></b><b><svg><use href="#zin"/></svg></b><b><svg><use href="#zprev"/></svg></b><b><svg><use href="#checks"/></svg></b><b><svg><use href="#brush"/></svg></b></div>
<svg class="cv" viewBox="44 716 360 152" preserveAspectRatio="none">
<path class="gl" d="M44 728.500h360M44 780.500h360M44 831.500h360M97.500 716v152M354.500 716v152"/>
<path d="M97.500 737L212 744.500 262 743.500 333 752.700" fill="none" stroke="#d400d4"/><path d="M97.500 838.700L208 847.300 333 839.700" fill="none" stroke="#8c5300"/>
<g class="ax"><text x="50" y="727">10</text><text x="49" y="779">5</text><text x="49" y="830">0</text><text transform="translate(96 866) rotate(-90)">0</text><text transform="translate(353 866) rotate(-90)">5</text></g>
</svg></div>
</section>

<section class="win s2">
<div class="cap"><svg class="wi"><use href="#w-sec"/></svg><span>Section Section 2 "sections-&gt;section 2"</span><b class="cb"><svg><use href="#c-min"/></svg></b><b class="cb"><svg><use href="#c-max"/></svg></b><b class="cb"><svg><use href="#c-x"/></svg></b></div>
<div class="client"><div class="tools"><b><svg><use href="#menu"/></svg></b><b><svg><use href="#plus"/></svg></b><b><svg><use href="#minus"/></svg></b><b class="wide">0.2x</b><b><svg><use href="#sec"/></svg></b><b><svg><use href="#left"/></svg></b><b><svg><use href="#right"/></svg></b><b><svg><use href="#torch"/></svg></b><b class="act"><svg><use href="#fit"/></svg></b><b><svg><use href="#pan"/></svg></b><b><svg><use href="#zpm"/></svg></b><b><svg><use href="#zin"/></svg></b><b><svg><use href="#zprev"/></svg></b><b><svg><use href="#checks"/></svg></b></div>
<svg class="cv" viewBox="427 717 332 156" preserveAspectRatio="none">
<path class="gl" d="M427 735.500h332M427 775.500h332M427 815.500h332M427 854.500h332"/><path class="gw" d="M575 717v156"/>
<path d="M471 773.500L627 753.300 711 757.300" fill="none" stroke="#d400d4"/><path d="M441 815L500 826.500M560 829L737 817" fill="none" stroke="#8c5300"/>
<g class="ax"><text x="433" y="733.500">10</text><text x="432" y="774">5</text><text x="432" y="813.500">0</text><text x="432" y="853">-5</text><text transform="translate(574 871.500) rotate(-90)">5</text></g>
</svg></div>
</section>

<section class="win s3">
<div class="cap"><svg class="wi"><use href="#w-sec"/></svg><span>Section Long "sections-&gt;section 3"</span><b class="cb"><svg><use href="#c-min"/></svg></b><b class="cb"><svg><use href="#c-max"/></svg></b><b class="cb"><svg><use href="#c-x"/></svg></b></div>
<div class="client"><div class="tools"><b><svg><use href="#menu"/></svg></b><b><svg><use href="#plus"/></svg></b><b><svg><use href="#minus"/></svg></b><b class="wide">0.2x</b><b class="act"><svg><use href="#sec"/></svg></b><b><svg><use href="#left"/></svg></b><b><svg><use href="#right"/></svg></b><b><svg><use href="#torch"/></svg></b><b><svg><use href="#fit"/></svg></b><b><svg><use href="#pan"/></svg></b><b><svg><use href="#zpm"/></svg></b><b><svg><use href="#zin"/></svg></b><b><svg><use href="#zprev"/></svg></b><b><svg><use href="#checks"/></svg></b><b><svg><use href="#brush"/></svg></b><b><svg><use href="#print"/></svg></b><b><svg><use href="#copy"/></svg></b><b><svg><use href="#grid"/></svg></b></div>
<svg class="cv" viewBox="789 717 426 161" preserveAspectRatio="none">
<path class="gl" d="M789 718.500h426M789 756.500h426M789 775.500h426M789 794.500h426M789 813.500h426M789 832.500h426M789 870.500h426M894.500 717v161M1085.500 717v161"/><path class="gw" d="M789 737h426M789 852h426M800 717v161M990 717v161M1180 717v161"/>
<path d="M854 777.300L960 794M999 793.500L1066 787.300 1081 788.500M1138 786.500L1193 782" fill="none" stroke="#d400d4"/><path d="M830 816L914 818 953 813.500M983 813.300L999 817M1126 816.300L1181 815.300" fill="none" stroke="#8c5300"/>
<g class="ax"><text x="797" y="735.500">20</text><text x="797" y="755">15</text><text x="797" y="774">10</text><text x="797" y="792.500">5</text><text x="797" y="811.500">0</text><text x="796" y="831">-5</text><text x="796" y="850">-10</text><text x="796" y="868.500">-15</text><text transform="translate(798.500 876.500) rotate(-90)">0</text><text transform="translate(893 876.500) rotate(-90)">5</text><text transform="translate(988 875.500) rotate(-90)">10</text><text transform="translate(1084 875.500) rotate(-90)">15</text><text transform="translate(1179 875.500) rotate(-90)">20</text></g>
</svg></div>
</section>

<section class="win persp">
<div class="cap"><svg class="wi"><use href="#w-persp"/></svg><span>Perspective OpenGL 3D</span><b class="cb"><svg><use href="#c-min"/></svg></b><b class="cb"><svg><use href="#c-max"/></svg></b><b class="cb close"><svg><use href="#c-x"/></svg></b></div>
<div class="client"><div class="tools"><b><svg><use href="#menu"/></svg></b><b><svg><use href="#plus"/></svg></b><b><svg><use href="#minus"/></svg></b><b><svg><use href="#fit"/></svg></b><b><svg><use href="#pan"/></svg></b><b><svg><use href="#zpm"/></svg></b><b><svg><use href="#zin"/></svg></b><b><svg><use href="#zprev"/></svg></b><b><svg><use href="#checks"/></svg></b><b><svg><use href="#eye"/></svg></b><b><svg><use href="#planet"/></svg></b><b><svg><use href="#camera"/></svg></b><b><svg><use href="#joy"/></svg></b><b><svg><use href="#walk"/></svg></b><b><svg><use href="#wheel"/></svg></b><b><svg><use href="#brush"/></svg></b><b><svg><use href="#print"/></svg></b><b><svg><use href="#copy"/></svg></b><b><svg><use href="#grid"/></svg></b><b><svg><use href="#star"/></svg></b><b><svg><use href="#starb"/></svg></b><b><svg><use href="#layout"/></svg></b></div>
<svg class="cv" viewBox="694 162 528 487" preserveAspectRatio="none">
<path d="M778 253L939.500 205.500 1089 360.500 1012 340.500z" fill="#f0f"/><path d="M893 220L1089 360.500 1012 340.500z" fill="#e000e0"/>
<path d="M848 521L987 477 1107 544.500 1015 602 823 591z" fill="#a66200"/><path d="M987 477L1107 544.500 1015 602z" fill="#8c5300"/><path d="M848 521L1015 602 823 591z" fill="#6e4200"/>
<path d="M742.500 585v16" stroke="#a00000"/><path d="M743 601.500l9-1.500" stroke="#00a000"/><path d="M743 601.500l12 2.500" stroke="#0000a0"/>
<g class="xyz"><text transform="translate(743 585) skewX(-8) rotate(-3)" font-size="26" textLength="12" lengthAdjust="spacingAndGlyphs" fill="red" stroke="red">Z</text><text transform="translate(757 606)" font-size="18" textLength="11" lengthAdjust="spacingAndGlyphs" fill="#0f0" stroke="#0f0">Y</text><text transform="translate(764 617.500) rotate(10)" font-size="29" textLength="18" lengthAdjust="spacingAndGlyphs" fill="#00f" stroke="#00f">X</text></g>
</svg></div>
</section>
</main>
</div>
</div>
</body>
</html>
```
FILE: styles.css
```css
* { box-sizing: border-box; }
body { margin: 0; width: 1230px; height: 888px; overflow: hidden; font: 11.3px/1 "Noto Sans", "Open Sans", sans-serif; color: #111; }
.defs { position: absolute; }
svg { display: block; flex: none; }
b { font-weight: normal; }
.app { display: flex; flex-direction: column; width: 1230px; height: 888px; background: #f0f0f0; border-left: 1px solid #34466e; border-top: 1px solid #e8e8e8; overflow: hidden; }

.title { flex: none; height: 28px; background: #fff; border-top: 1px solid #2b3d60; display: flex; align-items: center; gap: 4px; padding-left: 7px; }
.title svg { width: 16px; height: 16px; }
.title span { font-size: 11.3px; letter-spacing: -.5px; white-space: pre; word-spacing: 1px; }

.grip { width: 3px; height: 13px; align-self: center; background: repeating-linear-gradient(#b4b4b4 0 1px, #f0f0f0 1px 2px); }
.menubar { flex: none; height: 22px; padding-left: 3px; display: grid; align-items: center; grid-template-columns: 12px 48px 30px 42px 49px 47px 33px 34px 29px 10px 46px 56px 47px 42px 33px 46px 49px 36px 40px; }
.menubar span { letter-spacing: -.35px; white-space: nowrap; }
.menubar .rule { width: 1px; height: 17px; background: #ccc; }

.fields { flex: none; height: 23px; padding-left: 3px; display: grid; align-items: center; grid-template-columns: 6px 84px 23px 103px 23px 84px 23px 63px 23px 84px 23px 43px 23px 53px 21px 23px 7px 22px 53px 23px 34px 23px 6px 23px 53px 23px 33px 23px 33px 24px 6px 64px 23px 53px; }
.in { height: 18px; margin-right: 2px; background: #fff; border: 1px solid; border-color: #6b6b6b #e3e3e3 #e3e3e3 #6b6b6b; box-shadow: inset 1px 1px 0 #a8a8a8; padding: 2px 0 0 4px; letter-spacing: -.3px; overflow: hidden; white-space: nowrap; }
.in.tight { padding-left: 1px; }
.fb { width: 19px; height: 20px; display: flex; align-items: center; justify-content: center; background: #efece0; border: 1px solid; border-color: #fff #777 #777 #fff; box-shadow: inset -1px -1px 0 #aaa; }
.fb svg { width: 15px; height: 15px; }
.fb .swatch { width: 14px; height: 15px; background: #0ff; }
.flip { transform: scaleX(-1); }

.bar { flex: none; height: 25px; padding-left: 3px; display: grid; align-items: center; grid-template-columns: 6px 20px 20px 20px 24px 24px 24px 20px 21px 10px 24px 24px 24px 24px 8px 22px 21px 20px 22px 21px 21px 23px 20px 20px 18px 22px 22px 23px 22px 24px 8px 24px 24px 23px 25px 25px 11px 154px 21px 9px 20px 21px 20px 20px 21px 20px 20px 20px 20px 20px 20px 21px 11px 20px 20px; }
.ic { position: relative; height: 20px; display: flex; align-items: center; justify-content: center; }
.ic svg { width: 15px; height: 15px; }
.bar .ic svg { width: 16px; height: 16px; }
.c::after { content: ""; position: absolute; right: 1px; bottom: 1px; border: solid; border-width: 0 0 4px 4px; border-color: transparent transparent #111 transparent; }
.bar .box svg { border: 1px solid #2f8ae6; background: #fff; }
.key { align-self: start; height: 18px; margin: 1px 2px 0 0; padding-bottom: 1px; display: flex; align-items: center; justify-content: center; font-size: 11.5px; border: 1px solid; border-color: #fff #6e6e6e #6e6e6e #fff; box-shadow: inset -1px -1px 0 #a8a8a8; }
.key.on { background: #f8f8f8; border-color: #5c5c5c #fff #fff #5c5c5c; box-shadow: inset 1px 1px 0 #b0b0b0; }
.find { height: 20px; }

.work { flex: 1; display: flex; min-height: 0; }
.side { flex: none; width: 29px; display: flex; flex-direction: column; padding-right: 5px; }
.side .ic { flex: none; height: 20.25px; }
.side .c::after { right: 0; }
.hgrip { flex: none; height: 11px; margin-left: 4px; width: 18px; background: repeating-linear-gradient(90deg, #a8a8a8 0 1px, #f0f0f0 1px 2px) 0 50% / 18px 3px no-repeat; }
.hgrip.first { height: 9px; }

.mdi { position: relative; flex: 1; background: #ababab; overflow: hidden; border-left: 2px solid #6c6c6c; border-top: 2px solid #6c6c6c; box-shadow: inset 1px 1px 0 #dcdcdc; }
.mdi::before { content: ""; position: absolute; left: 2px; top: 1px; width: 2px; height: 555px; background: #777; }

/* child windows; offsets are measured from the workspace's inner corner (32,101) */
.win { position: absolute; display: flex; flex-direction: column; border: 1px solid #5d5d5d; border-radius: 6px 6px 0 0; background: linear-gradient(#c0cfdd, #d7e4f2 30px); padding: 0 7px 7px; box-shadow: inset 0 0 0 1px #e9f1f9; }
.plan { left: 4px; top: 1px; width: 649px; height: 554px; border-radius: 0; border-left-color: #d7e4f2; border-top-color: #b9c8d6; padding: 0 6px 7px; }
.s1 { left: 3px; top: 559px; width: 377px; height: 217px; padding-right: 6px; }
.s2 { left: 386px; top: 560px; width: 350px; height: 222px; }
.s3 { left: 749px; top: 560px; width: 444px; height: 226px; padding: 0 8px 7px 6px; }
.persp { left: 654px; top: 4px; width: 544px; height: 553px; padding: 0 6px 7px; background: linear-gradient(#93b0d2, #b9d1ea 30px); border-color: #222; box-shadow: inset -1px -1px 0 #1ab1d0, inset 1px 1px 0 #d8e6f4; }
.cap { flex: none; height: 28px; display: flex; align-items: center; padding: 4px 1px 0 0; color: #979b9f; }
.s2 .cap, .s3 .cap { padding-top: 6px; }
.plan .cap { height: 24px; padding: 0 1px 0 0; }
.persp .cap { height: 29px; color: #10182a; padding-top: 4px; }
.cap .wi { width: 16px; height: 16px; margin-right: 3px; }
.persp .wi { margin: 0 4px 0 1px; }
.cap span { flex: 1; white-space: nowrap; letter-spacing: -.34px; font-size: 11.3px; }
.persp .cap span { letter-spacing: -.55px; }
.cb { width: 29px; height: 17px; margin: -2px 0 0 2px; border: 1px solid #8793a3; border-radius: 2px; background: linear-gradient(#d3dfeb, #bccbdc); box-shadow: inset 0 0 0 1px #e0e9f3; overflow: hidden; }
.cb svg { width: 28px; height: 16px; margin: 0 0 0 -1px; }
.plan .cb { margin-top: 0; height: 16px; }
.plan .cb svg { margin-top: -1px; }
.persp .cb { background: linear-gradient(#c4d6ea, #98b3d2); border-color: #52688a; }
.persp .cb.close { background: linear-gradient(#e0958a, #c4402a 50%, #cf6650); border-color: #5e2018; box-shadow: inset 0 0 0 1px #e6a89c; }
.client { flex: 1; min-height: 0; display: flex; flex-direction: column; border: 1px solid; border-color: #777 #fff #fff #777; overflow: hidden; }
.cv { flex: 1; width: 100%; min-height: 0; background: #000; }
.tools { flex: none; height: 26px; display: flex; align-items: flex-start; gap: 1.86px; padding: 1px 0 0 2px; background: #f2f2f2; overflow: hidden; }
.s2 .tools { padding-top: 2px; }
.s3 .tools { padding: 2px 0 0 3px; }
.persp .tools { padding-left: 3px; }
.tools b { flex: none; width: 22px; height: 23px; display: flex; align-items: center; justify-content: center; background: #f4f1e4; border: solid; border-width: 1px 2px 2px 1px; border-color: #fff #898989 #898989 #fff; box-shadow: inset 0 0 0 1px #f6f6f6; }
.tools b svg { width: 16px; height: 16px; }
.tools b.act { border-width: 2px; border-color: #6f6f6f; background: #e6e6e6; }
.tools b.wide { width: 33px; background: #f0f0f0; font-size: 11px; letter-spacing: -.4px; }
.dots { width: 2px; height: 23px; background: linear-gradient(#777 0 2px, transparent 2px 21px, #333 21px); }

.lbl text { font: 15px "Liberation Sans", Arial, sans-serif; stroke-width: .4px; }
.num text { font: italic 11px "Liberation Sans", Arial, sans-serif; fill: #0cc; }
.num .big { font-size: 13px; }
.ax text { font: 300 14px Inter, sans-serif; font-feature-settings: "zero", "tnum"; letter-spacing: .3px; fill: #e0e000; }
.xyz text { font-family: "Liberation Sans", Arial, sans-serif; stroke-width: .5px; }
.gl { stroke: #128012; fill: none; }
.gw { stroke: #0d5a0d; stroke-width: 2; fill: none; }
```
